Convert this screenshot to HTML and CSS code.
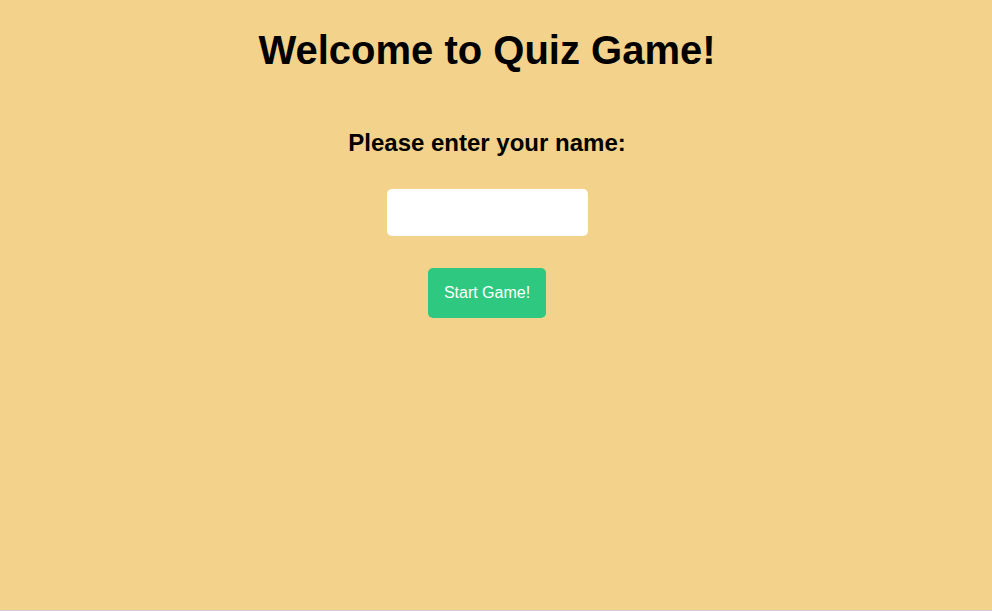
FILE: index.html
```html
<!DOCTYPE html>
<html lang="en">
<head>
<meta charset="utf-8">
<title>Quiz Game</title>
<link rel="stylesheet" href="styles.css">
</head>
<body>
<main class="start">
  <h1 class="title">Welcome to Quiz Game!</h1>
  <h2 class="prompt">Please enter your name:</h2>
  <input class="name-input" type="text" aria-label="Name">
  <button class="start-btn" type="button">Start Game!</button>
</main>
</body>
</html>
```

FILE: styles.css
```css
html {
  background: #cfcfcf;
  height: 100%;
}
body {
  margin: 0;
  height: calc(100% - 1px);
  background: #f3d28b;
  font-family: "Liberation Sans", Arial, sans-serif;
  color: #000;
}
.start {
  display: flex;
  flex-direction: column;
  align-items: center;
  padding: 27px 18px 0 0;
}
.title {
  margin: 0;
  font-size: 40px;
  font-weight: bold;
  line-height: 46px;
}
.prompt {
  margin: 56px 0 0;
  font-size: 24px;
  font-weight: bold;
  line-height: 28px;
}
.name-input {
  margin-top: 32px;
  width: 201px;
  height: 47px;
  box-sizing: border-box;
  border: none;
  border-radius: 5px;
  background: #fff;
  padding: 0 10px;
  font-size: 16px;
  font-family: inherit;
}
.start-btn {
  margin-top: 32px;
  width: 118px;
  height: 50px;
  border: none;
  border-radius: 5px;
  background: #2ec880;
  color: #fff;
  font-family: "Liberation Sans", Arial, sans-serif;
  font-size: 16px;
}
```
